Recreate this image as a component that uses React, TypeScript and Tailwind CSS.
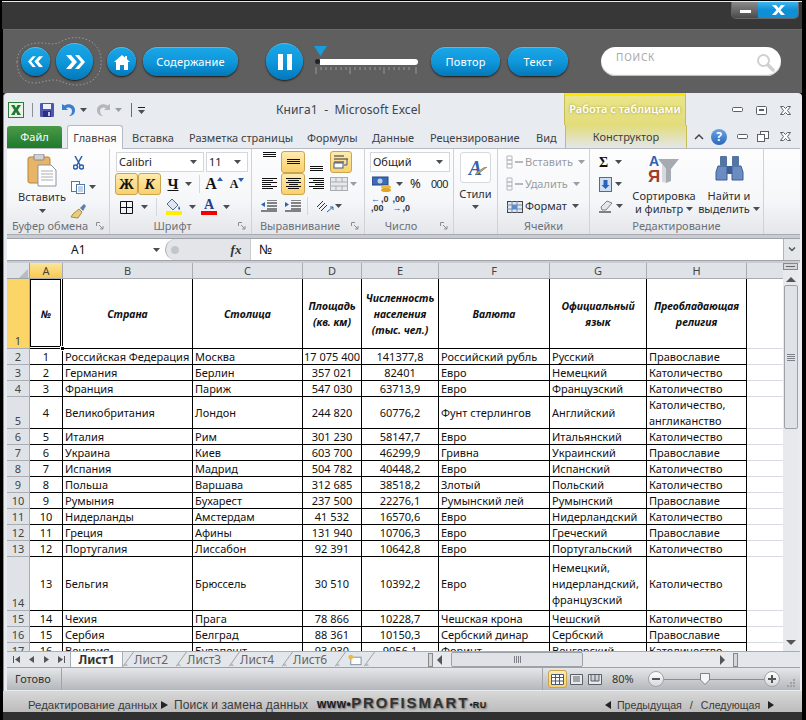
import type { ReactNode } from "react";

const uiFont = "font-['Noto_Sans','Liberation_Sans',sans-serif]";

// column widths incl. the 1px right border
const colWidths = [23, 33, 130, 110, 59, 77, 111, 97, 100, 36];
const colNames = ["A", "B", "C", "D", "E", "F", "G", "H"];

const headerCells: ReactNode[] = [
    "№",
    "Страна",
    "Столица",
    <>Площадь<br />(кв. км)</>,
    <>Численность<br />населения<br />(тыс. чел.)</>,
    "Валюта",
    <>Официальный<br />язык</>,
    <>Преобладающая<br />религия</>,
];

interface Row {
    h: number;
    cells: ReactNode[];
}

const rows: Row[] = [
    { h: 16, cells: ["1", "Российская Федерация", "Москва", "17 075 400", "141377,8", "Российский рубль", "Русский", "Православие"] },
    { h: 16, cells: ["2", "Германия", "Берлин", "357 021", "82401", "Евро", "Немецкий", "Католичество"] },
    { h: 16, cells: ["3", "Франция", "Париж", "547 030", "63713,9", "Евро", "Французский", "Католичество"] },
    { h: 32, cells: ["4", "Великобритания", "Лондон", "244 820", "60776,2", "Фунт стерлингов", "Английский", <span className="block leading-[15.5px]">Католичество,<br />англиканство</span>] },
    { h: 16, cells: ["5", "Италия", "Рим", "301 230", "58147,7", "Евро", "Итальянский", "Католичество"] },
    { h: 16, cells: ["6", "Украина", "Киев", "603 700", "46299,9", "Гривна", "Украинский", "Православие"] },
    { h: 16, cells: ["7", "Испания", "Мадрид", "504 782", "40448,2", "Евро", "Испанский", "Католичество"] },
    { h: 16, cells: ["8", "Польша", "Варшава", "312 685", "38518,2", "Злотый", "Польский", "Католичество"] },
    { h: 16, cells: ["9", "Румыния", "Бухарест", "237 500", "22276,1", "Румынский лей", "Румынский", "Православие"] },
    { h: 16, cells: ["10", "Нидерланды", "Амстердам", "41 532", "16570,6", "Евро", "Нидерландский", "Католичество"] },
    { h: 16, cells: ["11", "Греция", "Афины", "131 940", "10706,3", "Евро", "Греческий", "Православие"] },
    { h: 16, cells: ["12", "Португалия", "Лиссабон", "92 391", "10642,8", "Евро", "Португальский", "Католичество"] },
    { h: 54, cells: ["13", "Бельгия", "Брюссель", "30 510", "10392,2", "Евро", <span className="block leading-[16px]">Немецкий,<br />нидерландский,<br />французский</span>, "Католичество"] },
    { h: 16, cells: ["14", "Чехия", "Прага", "78 866", "10228,7", "Чешская крона", "Чешский", "Католичество"] },
    { h: 16, cells: ["15", "Сербия", "Белград", "88 361", "10150,3", "Сербский динар", "Сербский", "Православие"] },
    { h: 16, cells: ["16", "Венгрия", "Будапешт", "93 030", "9956,1", "Форинт", "Венгерский", "Католичество"] },
];

const blueBtn =
    "flex items-center justify-center bg-[linear-gradient(#19a6e6_0%,#0f97dc_50%,#0378b8_100%)] border-t border-[#4cc0f0] shadow-[0_1px_2px_rgba(0,0,0,0.75)] text-white";

const Caret = ({ dim }: { dim?: boolean }) => (
    <svg width="7" height="4" viewBox="0 0 7 4" className="shrink-0">
        <path d="M0 0h7L3.5 4z" fill={dim ? "#9a9da2" : "#4a4d52"} />
    </svg>
);

const Round = ({ size, children }: { size: number; children: ReactNode }) => (
    <div
        className={`${blueBtn} rounded-full shrink-0`}
        style={{ width: size, height: size }}
    >
        {children}
    </div>
);

const Pill = ({ w, label }: { w: number; label: string }) => (
    <div
        className={`${blueBtn} h-[29px] rounded-full shrink-0 text-[11px] tracking-[0.2px] ${uiFont}`}
        style={{ width: w }}
    >
        {label}
    </div>
);

const Chevrons = ({ flip, size }: { flip?: boolean; size: number }) => (
    <svg width={size} height={size * 0.7} viewBox="0 0 20 14" className={flip ? "rotate-180" : ""}>
        <path d="M1 0h5l6 7-6 7H1l6-7zM10 0h4l6 7-6 7h-4l6-7z" fill="#fff" />
    </svg>
);

const Toolbar = () => (
    <div className="h-[64px] shrink-0 bg-[#5f5f5f] border-t border-[#6a6a6a] flex items-center pl-[15px] relative">
        <svg className="absolute left-[11px] top-[5px]" width="90" height="54" viewBox="0 0 90 54" fill="none">
            <path
                d="M3 27C3 13 14 8 26 8c10 0 14 3 22-2 8-4 18-5 28 0 9 5 12 14 11 24-1 13-12 20-24 20-12 0-15-5-23-5-8 0-13 3-20 3C11 48 3 41 3 27z"
                stroke="#9a9a9a"
                strokeDasharray="1.5 2"
            />
        </svg>
        <div className="flex items-center relative ml-[3px]">
            <Round size={29}><Chevrons flip size={16} /></Round>
            <div className="ml-[6px]"><Round size={37}><Chevrons size={20} /></Round></div>
        </div>
        <div className="ml-[14px]">
            <Round size={29}>
                <svg width="16" height="15" viewBox="0 0 16 15">
                    <path d="M8 0l3 2.6V1h2v3.3L16 7h-2v8h-4V10H6v5H2V7H0z" fill="#fff" />
                </svg>
            </Round>
        </div>
        <div className="ml-[7px]"><Pill w={95} label="Содержание" /></div>
        <div className="ml-[28px]">
            <Round size={37}>
                <svg width="14" height="16" viewBox="0 0 14 16">
                    <path d="M0 0h5v16H0zM9 0h5v16H9z" fill="#fff" />
                </svg>
            </Round>
        </div>
        <div className="ml-[12px] w-[103px] shrink-0 flex flex-col">
            <svg width="13" height="10" viewBox="0 0 13 10" className="ml-[-1px] mt-[-3px]">
                <path d="M0 0h13L6.5 10z" fill="#1a9bdc" />
            </svg>
            <div className="flex items-center h-[8px] mt-[2px]">
                <div className="w-[5px] h-[5px] rounded-full bg-[#222]" />
                <div className="flex-1 h-[6px] bg-white rounded-r-[3px]" />
            </div>
            <svg width="103" height="8" viewBox="0 0 103 8" className="mt-[1px]">
                <path
                    d="M1 0v7M35 0v7M69 0v7M101 0v7M6 0v3M11 0v3M16 0v3M21 0v3M26 0v3M31 0v3M40 0v3M45 0v3M50 0v3M55 0v3M60 0v3M65 0v3M74 0v3M79 0v3M84 0v3M89 0v3M94 0v3"
                    stroke="#999"
                />
            </svg>
        </div>
        <div className="ml-[13px]"><Pill w={69} label="Повтор" /></div>
        <div className="ml-[8px]"><Pill w={60} label="Текст" /></div>
        <div className="ml-[33px] w-[180px] h-[29px] bg-white rounded-full shadow-[inset_0_-1px_1px_#bbb] flex items-start justify-between pl-[15px] pr-[6px] shrink-0">
            <span className={`text-[10px] text-[#a8a8a8] tracking-[0.8px] mt-[3px] ${uiFont}`}>ПОИСК</span>
            <svg width="19" height="19" viewBox="0 0 19 19" fill="none" className="mt-[6px]" stroke="#d0d0d0">
                <circle cx="7.5" cy="7.5" r="5.5" strokeWidth="2" />
                <path d="M12 12l5 5" strokeWidth="3.5" strokeLinecap="round" />
            </svg>
        </div>
    </div>
);

const TopBar = () => (
    <div className="h-[28px] shrink-0 bg-[#373737] border-t border-[#e8e8e8] mt-px ml-[-1px] flex justify-end pr-[3px]">
        <div className="w-[68px] h-[17px] flex rounded-b-[5px] overflow-hidden border border-t-0 border-[#666]">
            <div className="w-[26px] bg-[linear-gradient(#8a8a8a,#4b4b4b)] flex items-center justify-center">
                <div className="w-[11px] h-[3px] bg-white mt-[3px]" />
            </div>
            <div className="flex-1 bg-[linear-gradient(#3fb4ee_0%,#0e8fd6_50%,#0e8fd6_100%)] flex items-center justify-center">
                <svg width="13" height="10" viewBox="0 0 13 10">
                    <path d="M0 0h4l2.5 3L9 0h4L8.5 5 13 10H9L6.5 7 4 10H0l4.5-5z" fill="#fff" />
                </svg>
            </div>
        </div>
    </div>
);

const ExcelLogo = () => (
    <svg width="16" height="16" viewBox="0 0 16 16" className="shrink-0">
        <rect x="0.5" y="0.5" width="15" height="15" fill="#e9f3e6" stroke="#2c7d37" />
        <path d="M3 3h3.5L8 6l1.5-3H13L9.8 8 13 13H9.5L8 10l-1.5 3H3l3.2-5z" fill="#1f7a33" />
    </svg>
);

const SaveIcon = () => (
    <svg width="14" height="14" viewBox="0 0 14 14" className="shrink-0">
        <rect width="14" height="14" rx="1" fill="#4f56b0" />
        <rect x="3" y="1" width="8" height="5" fill="#eef0fa" />
        <rect x="3" y="8" width="8" height="6" fill="#2a2f80" />
        <rect x="8" y="9" width="2" height="4" fill="#c3c6e8" />
    </svg>
);

const UndoIcon = ({ color, flip }: { color: string; flip?: boolean }) => (
    <svg width="14" height="14" viewBox="0 0 14 14" fill="none" className={flip ? "-scale-x-100 shrink-0" : "shrink-0"}>
        <path d="M0 1v6h6L4 5c3-1.5 6 0 6 3 0 2-1 4-3 5 4 0 6-2.500 6-6C13 2 7-.5 2.500 2.500z" fill={color} />
    </svg>
);

const WinControls = ({ gap }: { gap: boolean }) => (
    <div className="flex items-center">
        <svg width="11" height="6" viewBox="0 0 11 6">
            <rect x="0.5" y="0.5" width="10" height="4" rx="1" fill="#fff" stroke="#5a6068" />
        </svg>
        <div className={gap ? "w-[13px]" : "w-[9px]"} />
        {gap ? (
            <svg width="11" height="9" viewBox="0 0 11 9">
                <rect x="0.5" y="0.5" width="10" height="8" rx="1" fill="#fff" stroke="#5a6068" />
                <rect x="3" y="3" width="5" height="2" fill="#5a6068" />
            </svg>
        ) : (
            <svg width="12" height="11" viewBox="0 0 12 11" fill="#fff" stroke="#5a6068">
                <rect x="3.5" y="0.5" width="8" height="7" />
                <rect x="0.5" y="3.5" width="7" height="7" />
            </svg>
        )}
        <div className={gap ? "w-[13px]" : "w-[11px]"} />
        <svg width="11" height="9" viewBox="0 0 11 9">
            <path d="M0.500 0.500h3l2 2 2-2h3l-3 4 3 4h-3l-2-2-2 2h-3l3-4z" fill="#fff" stroke="#5a6068" />
        </svg>
    </div>
);

const TitleRow = () => (
    <div className="h-[32px] shrink-0 flex">
        <div className="w-[269px] shrink-0 flex items-center gap-[4px] pl-px pt-[2px]">
            <ExcelLogo />
            <div className="w-px h-[14px] bg-[#8b9097] ml-[4px]" />
            <div className="ml-[3px]"><SaveIcon /></div>
            <div className="ml-[4px] flex items-center gap-[4px]">
                <UndoIcon color="#3a7fcf" />
                <Caret />
            </div>
            <div className="ml-[5px] flex items-center gap-[5px]">
                <UndoIcon color="#b4b6ba" flip />
                <Caret dim />
            </div>
            <div className="w-px h-[14px] bg-[#6a6f76] ml-[5px]" />
            <div className="ml-[2px] flex flex-col gap-[2px]">
                <div className="w-[7px] h-px bg-[#222]" />
                <Caret />
            </div>
        </div>
        <div className={`w-[288px] shrink-0 flex items-center pt-[2px] text-[12px] tracking-[0.1px] text-[#3b4453] ${uiFont}`}>
            <span className="whitespace-pre">Книга1  -  Microsoft Excel</span>
        </div>
        <div className="w-[122px] shrink-0 border-x border-[#c4bd5a] border-t-[3px] border-t-[#ffe600] bg-[linear-gradient(#ebe58b,#e2dc7b)] flex justify-center pt-[5px]">
            <span className={`text-[11px] font-semibold text-white [text-shadow:0_0_3px_#a09a30] ${uiFont}`}>Работа с таблицами</span>
        </div>
        <div className="flex-1 flex items-center pl-[46px] pt-[2px]">
            <WinControls gap />
        </div>
    </div>
);

const tabs: [string, number][] = [
    ["Вставка", 132],
    ["Разметка страницы", 189],
    ["Формулы", 307],
    ["Данные", 372],
    ["Рецензирование", 430],
    ["Вид", 536],
];

const TabsRow = () => (
    <div className={`h-[24px] shrink-0 flex text-[11px] text-[#3b3f46] border-b border-[#b6bac0] ${uiFont}`}>
        <div className="w-[55px] mt-px shrink-0 bg-[linear-gradient(#4a9a47,#1f7a2c)] rounded-t-[3px] text-white flex items-center justify-center">Файл</div>
        <div className="w-[56px] ml-[5px] shrink-0 bg-[#fcfcfd] border border-b-0 border-[#b6bac0] rounded-t-[3px] h-[24px] flex items-center justify-center pt-px">Главная</div>
        <div className="w-[442px] shrink-0 flex">
            {tabs.map(([label, x], i) => (
                <span
                    key={label}
                    className="whitespace-nowrap leading-[25px] shrink-0"
                    style={{ marginLeft: i === 0 ? 9 : 0, width: i < tabs.length - 1 ? tabs[i + 1][1] - x : 28 }}
                >
                    {label}
                </span>
            ))}
        </div>
        <div className="w-[122px] shrink-0 border-x border-[#c4bd5a] bg-[linear-gradient(#e2dc7b,#e4e6ea)] flex items-center justify-center pt-px">Конструктор</div>
        <div className="flex-1 flex items-center pl-[7px]">
            <svg width="10" height="7" viewBox="0 0 10 7" fill="none" stroke="#444" strokeWidth="1.500">
                <path d="M1 6l4-4 4 4" />
            </svg>
            <div className="ml-[7px] w-[16px] h-[16px] rounded-full bg-[linear-gradient(#6ea4e4,#2a68bc)] text-white text-[12px] font-bold flex items-center justify-center">?</div>
            <div className="ml-[10px]"><WinControls gap={false} /></div>
        </div>
    </div>
);

const GroupLabel = ({ label, launcher = true }: { label: string; launcher?: boolean }) => (
    <div className={`h-[17px] shrink-0 flex items-center justify-center relative pt-[2px] text-[11px] text-[#6b7079] ${launcher ? "pr-[16px]" : ""} ${uiFont}`}>
        <span>{label}</span>
        {launcher && (
            <svg width="8" height="8" viewBox="0 0 8 8" fill="none" stroke="#8a8e94" className="absolute right-[5px] top-[5px]">
                <path d="M0.500 4V0.500H4M3 3l4 4M7 4v3H4" />
            </svg>
        )}
    </div>
);

const Group = ({ w, label, launcher, children }: { w: number; label: string; launcher?: boolean; children: ReactNode }) => (
    <div className="shrink-0 flex flex-col border-r border-[#cfd2d7] bg-[linear-gradient(#fdfdfe_0%,#f6f7f9_60%,#e4e6ea_100%)]" style={{ width: w }}>
        <div className="flex-1 min-h-0">{children}</div>
        <GroupLabel label={label} launcher={launcher} />
    </div>
);

const ComboBox = ({ w, label }: { w: number; label: string }) => (
    <div className={`h-[20px] bg-white border border-[#d3d6da] flex items-center justify-between pl-[2px] pr-[6px] text-[11px] text-[#222] shrink-0 ${uiFont}`} style={{ width: w }}>
        <span>{label}</span>
        <Caret />
    </div>
);

const activeCell = "bg-[linear-gradient(#fdebb0,#fbd06a)] border border-[#c9a54e] rounded-[3px]";

const Tool = ({ w, active, children }: { w: number; active?: boolean; children: ReactNode }) => (
    <div className={`h-[22px] shrink-0 flex items-center justify-center ${active ? activeCell : ""}`} style={{ width: w }}>
        {children}
    </div>
);

// horizontal lines of the alignment buttons: [x, y, width]
const Lines = ({ lines, color = "#111" }: { lines: [number, number, number][]; color?: string }) => (
    <svg width="15" height="14" viewBox="0 0 15 14">
        {lines.map(([x, y, w], i) => (
            <rect key={i} x={x} y={y} width={w} height="1" fill={color} />
        ))}
    </svg>
);

const RibbonTitle = ({ children, className }: { children: ReactNode; className?: string }) => (
    <span className={`text-[11px] leading-[13px] text-[#2b3038] ${uiFont} ${className ?? ""}`}>{children}</span>
);

const ClipboardGroup = () => (
    <Group w={103} label="Буфер обмена">
        <div className="flex">
            <div className="w-[60px] pl-[10px] flex flex-col items-center pt-[5px]">
                <svg width="30" height="33" viewBox="0 0 30 33" className="shrink-0">
                    <rect x="1" y="3" width="22" height="26" rx="2" fill="#e8b468" stroke="#b98434" />
                    <rect x="7" y="0" width="10" height="6" rx="1" fill="#cfd3d8" stroke="#888" />
                    <path d="M11 11h13l5 5v16H11z" fill="#fff" stroke="#8d939b" />
                    <path d="M14 17h12M14 20h12M14 23h12M14 26h12" stroke="#a9adb3" />
                </svg>
                <RibbonTitle className="mt-[3px]">Вставить</RibbonTitle>
                <div className="mt-[6px]"><Caret /></div>
            </div>
            <div className="flex flex-col items-start pt-[3px] gap-[2px]">
                <Tool w={22}>
                    <svg width="11" height="14" viewBox="0 0 11 14" fill="none" stroke="#2a5fa8" strokeWidth="1.500">
                        <path d="M2 0l5 9M9 0L4 9" />
                        <circle cx="2.500" cy="11" r="2" />
                        <circle cx="8.500" cy="11" r="2" />
                    </svg>
                </Tool>
                <div className="flex items-center">
                    <Tool w={22}>
                        <svg width="15" height="13" viewBox="0 0 15 13" fill="#fff" stroke="#4d79ad">
                            <rect x="0.500" y="0.500" width="8" height="10" />
                            <rect x="5.500" y="3.500" width="8" height="9" />
                            <path d="M7 6h5M7 8h5M7 10h5" stroke="#88a3c4" />
                        </svg>
                    </Tool>
                    <Caret />
                </div>
                <Tool w={22}>
                    <svg width="16" height="15" viewBox="0 0 16 15">
                        <path d="M9 5l3 3-4 6-7-1 2-3z" fill="#e9cd7e" stroke="#a88a3d" />
                        <path d="M10 4l4-4 2 2-3 5z" fill="#5e7fae" />
                    </svg>
                </Tool>
            </div>
        </div>
    </Group>
);

const FontGroup = () => (
    <Group w={142} label="Шрифт">
        <div className="pl-[5px] pt-[3px] flex flex-col">
            <div className="flex gap-[2px] pl-px">
                <ComboBox w={88} label="Calibri" />
                <ComboBox w={42} label="11" />
            </div>
            <div className="flex items-center mt-px font-['Liberation_Serif',serif] font-bold text-[15px] leading-none text-[#111]">
                <Tool w={23} active>Ж</Tool>
                <Tool w={23} active><i>К</i></Tool>
                <Tool w={24}><u>Ч</u></Tool>
                <Caret />
                <div className="w-px h-[18px] bg-[#d4d7db] ml-[7px]" />
                <Tool w={28}>
                    <span className="text-[16px]">А</span>
                    <svg width="6" height="4" viewBox="0 0 6 4" className="mb-[10px]"><path d="M0 4h6L3 0z" fill="#2a5fa8" /></svg>
                </Tool>
                <Tool w={18}>
                    <span className="text-[12px]">А</span>
                    <svg width="6" height="4" viewBox="0 0 6 4" className="mb-[8px]"><path d="M0 0h6L3 4z" fill="#2a5fa8" /></svg>
                </Tool>
            </div>
            <div className="flex items-center mt-px">
                <Tool w={23}>
                    <svg width="13" height="13" viewBox="0 0 13 13" fill="none" stroke="#111">
                        <path d="M.5.500h12v12H.5zM6.500 0v13M0 6.500h13" />
                    </svg>
                </Tool>
                <div className="ml-[3px]"><Caret /></div>
                <div className="w-px h-[18px] bg-[#d4d7db] ml-[8px] mr-[8px]" />
                <div className="w-[17px] flex flex-col items-center">
                    <svg width="15" height="12" viewBox="0 0 15 12">
                        <path d="M6 0l6 6-5 5-6-6z" fill="#dfe6f0" stroke="#4a6c9b" />
                        <path d="M13 7c1 2 2 3 0 4-1-1-1-2 0-4z" fill="#2a5fa8" />
                    </svg>
                    <div className="w-[16px] h-[4px] bg-[#ffee00]" />
                </div>
                <div className="ml-[7px]"><Caret /></div>
                <div className="w-[16px] ml-[5px] flex flex-col items-center font-['Liberation_Serif',serif] font-bold text-[14px] leading-[12px] text-[#24408c]">
                    А
                    <div className="w-[16px] h-[4px] bg-[#f00000]" />
                </div>
                <div className="ml-[6px]"><Caret /></div>
            </div>
        </div>
    </Group>
);

const AlignGroup = () => (
    <Group w={113} label="Выравнивание">
        <div className="pl-[5px] pt-[2px] flex flex-col">
            <div className="flex items-start">
                <Tool w={24}><div className="mb-[6px]"><Lines lines={[[1, 0, 13], [1, 2, 13], [1, 4, 13]]} /></div></Tool>
                <Tool w={24} active><Lines lines={[[1, 4, 13], [1, 6, 13], [1, 8, 13]]} /></Tool>
                <Tool w={22}><div className="mt-[6px]"><Lines lines={[[1, 8, 13], [1, 10, 13], [1, 12, 13]]} /></div></Tool>
                <div className="ml-[3px]">
                    <Tool w={22} active>
                        <svg width="16" height="14" viewBox="0 0 16 14" fill="none">
                            <path d="M1 1h10M1 4h14M1 7h10" stroke="#333" />
                            <rect x="1" y="8" width="9" height="5" fill="#fff" stroke="#3a5d94" />
                            <path d="M14 4v6H11" stroke="#3a5d94" />
                        </svg>
                    </Tool>
                </div>
            </div>
            <div className="flex items-center">
                <Tool w={24}><Lines lines={[[0, 1, 15], [0, 3, 11], [0, 5, 15], [0, 7, 9], [0, 9, 15], [0, 11, 11]]} /></Tool>
                <Tool w={24} active><Lines lines={[[0, 1, 15], [2, 3, 11], [0, 5, 15], [3, 7, 9], [0, 9, 15], [2, 11, 11]]} /></Tool>
                <Tool w={22}><Lines lines={[[0, 1, 15], [4, 3, 11], [0, 5, 15], [6, 7, 9], [0, 9, 15], [4, 11, 11]]} /></Tool>
                <div className="ml-[3px] flex items-center gap-[2px]">
                    <svg width="18" height="14" viewBox="0 0 18 14" fill="#e8e9eb" stroke="#a8abb0">
                        <rect x="0.500" y="0.500" width="17" height="13" />
                        <path d="M0 5h18M0 9h18M6 0v5M12 0v5M6 9v5M12 9v5" />
                    </svg>
                    <Caret dim />
                </div>
            </div>
            <div className="flex items-center">
                <Tool w={24}>
                    <svg width="16" height="12" viewBox="0 0 16 12">
                        <path d="M6 0h10M6 3h10M6 6h10M6 9h10M0 11h16" stroke="#111" />
                        <path d="M0 4.500L4 2v5z" fill="#2a62b5" />
                    </svg>
                </Tool>
                <Tool w={24}>
                    <svg width="16" height="12" viewBox="0 0 16 12">
                        <path d="M6 0h10M6 3h10M6 6h10M6 9h10M0 11h16" stroke="#111" />
                        <path d="M4 4.500L0 2v5z" fill="#2a62b5" />
                    </svg>
                </Tool>
                <div className="w-px h-[18px] bg-[#d4d7db] ml-[2px]" />
                <div className="ml-[8px] flex items-center gap-[1px]">
                    <svg width="18" height="14" viewBox="0 0 18 14" fill="none" stroke="#333">
                        <path d="M1 8l6-6M3 10l6-6M5 12l6-6" />
                        <path d="M11 13l6-5M14 8h3v3" stroke="#2a62b5" />
                    </svg>
                    <Caret />
                </div>
            </div>
        </div>
    </Group>
);

const NumberGroup = () => (
    <Group w={89} label="Число">
        <div className="pl-[5px] pt-[3px] flex flex-col">
            <ComboBox w={80} label="Общий" />
            <div className={`flex items-center h-[22px] mt-px text-[#222] ${uiFont}`}>
                <svg width="20" height="17" viewBox="0 0 20 17" className="ml-[2px]">
                    <rect x="0" y="1" width="16" height="8" fill="#3c6cb8" stroke="#23497f" />
                    <circle cx="8" cy="5" r="2.500" fill="#bcd2ef" />
                    <ellipse cx="14" cy="11" rx="5" ry="2" fill="#f0b93c" />
                    <ellipse cx="14" cy="14" rx="5" ry="2" fill="#e0a526" />
                </svg>
                <div className="ml-[4px]"><Caret /></div>
                <span className="ml-[7px] text-[13px] w-[21px]">%</span>
                <span className="text-[11px] tracking-[-0.5px] font-['Liberation_Sans',sans-serif]">000</span>
            </div>
            <div className="flex items-center gap-[4px] pl-[1px]">
                <span className="flex flex-col text-[9px] leading-[9px] font-bold font-['Liberation_Sans',sans-serif] text-[#333]">
                    <span className="flex items-center gap-[1px]"><b className="text-[#2a62b5]">←</b>,0</span>
                    <span>,00</span>
                </span>
                <span className="flex flex-col text-[9px] leading-[9px] font-bold font-['Liberation_Sans',sans-serif] text-[#333]">
                    <span>,00</span>
                    <span className="flex items-center gap-[1px]"><b className="text-[#2a62b5]">→</b>,0</span>
                </span>
            </div>
        </div>
    </Group>
);

const StylesGroup = () => (
    <Group w={44} label="" launcher={false}>
        <div className="flex flex-col items-center pt-[3px]">
            <div className="w-[31px] h-[31px] bg-white border border-[#d6d9dd] rounded-[3px] flex items-center justify-center relative">
                <span className="font-['Liberation_Serif',serif] font-bold italic text-[20px] text-[#3360a8]">A</span>
                <svg width="12" height="9" viewBox="0 0 12 9" className="absolute right-[3px] bottom-[6px]">
                    <path d="M0 8l3-1 9-7-2-0-8 5z" fill="#d9a83a" stroke="#3360a8" strokeWidth="0.5" />
                </svg>
            </div>
            <RibbonTitle className="mt-[4px]">Стили</RibbonTitle>
            <div className="mt-[5px]"><Caret /></div>
        </div>
    </Group>
);

const CellIcon = ({ dim }: { dim?: boolean }) => (
    <svg width="18" height="15" viewBox="0 0 18 15" fill="none" stroke={dim ? "#b5b8bc" : "#4a6c9b"} className="shrink-0">
        <path d="M1 1h5v4H1zM1 5h5v4H1zM1 9h5v4H1z" />
        <path d="M9 7h8" strokeWidth="2" />
    </svg>
);

const CellsGroup = () => (
    <Group w={92} label="Ячейки" launcher={false}>
        <div className={`flex flex-col pl-[8px] pt-[2px] text-[11px] ${uiFont}`}>
            <div className="h-[22px] flex items-center gap-[1px] text-[#9a9da3]">
                <CellIcon dim /><span>Вставить</span><div className="ml-[4px]"><Caret dim /></div>
            </div>
            <div className="h-[22px] flex items-center gap-[1px] text-[#9a9da3]">
                <CellIcon dim /><span>Удалить</span><div className="ml-[4px]"><Caret dim /></div>
            </div>
            <div className="h-[22px] flex items-center gap-[1px] text-[#2b3038]">
                <svg width="18" height="16" viewBox="0 0 18 16" className="shrink-0">
                    <rect x="1.500" y="3.500" width="15" height="11" fill="#dfe7f3" stroke="#444" />
                    <path d="M1 7h15M1 11h15M6 3v12M11 3v12" stroke="#7b8ba5" />
                    <rect x="6" y="7" width="5" height="4" fill="#5b8ad0" />
                </svg>
                <span>Формат</span><div className="ml-[4px]"><Caret /></div>
            </div>
        </div>
    </Group>
);

const EditGroup = () => (
    <Group w={174} label="Редактирование" launcher={false}>
        <div className="flex">
            <div className="w-[38px] pl-[9px] pt-[2px] flex flex-col">
                <div className="h-[22px] flex items-center gap-[5px]">
                    <span className="font-['Liberation_Serif',serif] font-bold text-[14px] text-[#111] w-[11px]">Σ</span>
                    <Caret />
                </div>
                <div className="h-[22px] flex items-center gap-[3px]">
                    <svg width="13" height="15" viewBox="0 0 13 15">
                        <rect x="0.500" y="0.500" width="12" height="14" fill="#cfe0f6" stroke="#3b6fb5" />
                        <path d="M4.500 3h4v5h2l-4 4-4-4h2z" fill="#2a62b5" />
                    </svg>
                    <Caret />
                </div>
                <div className="h-[22px] flex items-center gap-[3px]">
                    <svg width="14" height="13" viewBox="0 0 14 13">
                        <path d="M2 7l6-6 5 2-6 7H3z" fill="#e4e6ea" stroke="#7d8289" />
                        <path d="M0 12h12" stroke="#111" />
                    </svg>
                    <Caret />
                </div>
            </div>
            <div className="w-[72px] flex flex-col items-center pt-[5px]">
                <svg width="32" height="30" viewBox="0 0 32 30">
                    <path d="M10 5h21l-8 10v12l-5 2V15z" fill="#a6abb1" />
                    <path d="M14 10l4 5v14l-4-1z" fill="#d6d9dc" />
                    <text x="1" y="12" fontFamily="Liberation Sans" fontWeight="700" fontSize="14" fill="#2a62b5">A</text>
                    <text x="0" y="28" fontFamily="Liberation Sans" fontWeight="700" fontSize="17" fill="#a33a2a">Я</text>
                </svg>
                <RibbonTitle className="mt-[5px] text-center">Сортировка</RibbonTitle>
                <span className="flex items-center gap-[3px]">
                    <RibbonTitle>и фильтр</RibbonTitle>
                    <Caret />
                </span>
            </div>
            <div className="w-[58px] flex flex-col items-center pt-[5px]">
                <svg width="29" height="30" viewBox="0 0 29 30">
                    <path d="M3 12h9v14H1V18z" fill="#6b8cc0" stroke="#3f5f94" />
                    <path d="M17 12h9l2 6v8H17z" fill="#6b8cc0" stroke="#3f5f94" />
                    <rect x="5" y="2" width="7" height="10" rx="1" fill="#54759f" />
                    <rect x="17" y="2" width="7" height="10" rx="1" fill="#54759f" />
                    <rect x="12" y="12" width="5" height="8" fill="#3f5f94" />
                </svg>
                <RibbonTitle className="mt-[5px]">Найти и</RibbonTitle>
                <span className="flex items-center gap-[3px]">
                    <RibbonTitle>выделить</RibbonTitle>
                    <Caret />
                </span>
            </div>
        </div>
    </Group>
);

const Ribbon = () => (
    <div className="h-[85px] shrink-0 flex">
        <ClipboardGroup />
        <FontGroup />
        <AlignGroup />
        <NumberGroup />
        <StylesGroup />
        <CellsGroup />
        <EditGroup />
        <div className="flex-1 bg-[linear-gradient(#fdfdfe_0%,#f6f7f9_60%,#e4e6ea_100%)]" />
    </div>
);

const FormulaBar = () => (
    <div className="h-[29px] shrink-0 bg-[#c9cdd2] pt-[3px] pb-[2px] border-t border-[#a9adb3]">
        <div className="h-[23px] flex bg-white border-y border-[#9fa3a9]">
            <div className={`w-[158px] shrink-0 flex items-center justify-between pr-[5px] pl-[64px] text-[12px] text-[#111] ${uiFont}`}>
                <span>A1</span>
                <Caret />
            </div>
            <div className="w-[57px] shrink-0 bg-[#e3e5e9] rounded-l-full border-l border-[#a9adb3] flex items-center pl-[5px]">
                <div className="w-[8px] h-[8px] rounded-full bg-[#c3c6ca]" />
            </div>
            <div className="w-[29px] shrink-0 flex items-center justify-center border-r border-[#c9cdd2] bg-[#e3e5e9] font-['Liberation_Serif',serif] italic font-bold text-[13px] text-[#333]">
                fx
            </div>
            <div className={`flex-1 flex items-center pl-[8px] text-[13px] text-[#111] ${uiFont}`}>№</div>
            <div className="w-[17px] shrink-0 bg-[#e4e7ea] border-l border-[#b0b4ba] flex items-center justify-center">
                <svg width="8" height="5" viewBox="0 0 8 5" fill="none" stroke="#555" strokeWidth="1.500">
                    <path d="M1 0.500l3 3 3-3" />
                </svg>
            </div>
        </div>
    </div>
);

const Sheet = () => (
    <div className={`h-[388px] shrink-0 flex ${uiFont}`}>
        <div className="w-[776px] h-full overflow-hidden shrink-0 bg-white">
            <table className="table-fixed border-separate border-spacing-0 text-[11px] leading-[15px] text-[#111]" style={{ width: 776 }}>
                <colgroup>
                    {colWidths.map((w, i) => (
                        <col key={i} style={{ width: w }} />
                    ))}
                </colgroup>
                <thead>
                    <tr className="h-[16px] text-[#444] text-center">
                        <th className="bg-[#dfe3e8] border-r border-b border-[#9da1a7] font-normal p-0">
                            <svg width="9" height="9" viewBox="0 0 9 9" className="ml-[12px] mt-[5px]">
                                <path d="M9 0v9H0z" fill="#b8bcc2" />
                            </svg>
                        </th>
                        {colNames.map((c, i) => (
                            <th
                                key={c}
                                className={`${i === 0 ? "bg-[linear-gradient(#fce49a,#f9c94f)]" : "bg-[#dfe3e8]"} border-r border-b border-[#a9adb3] font-normal p-0`}
                            >
                                {c}
                            </th>
                        ))}
                        <th className="bg-[#dfe3e8] border-b border-[#a9adb3] p-0" />
                    </tr>
                </thead>
                <tbody>
                    <tr className="h-[70px]">
                        <td className="bg-[#fcd567] border-r border-b border-[#a9adb3] text-center text-[#444] align-bottom p-0">1</td>
                        {headerCells.map((cell, i) => (
                            <td key={i} className="relative border-r border-b border-black text-center font-bold italic p-0 text-[10.5px] leading-[16px]">
                                {cell}
                                {i === 0 && (
                                    <>
                                        <div className="absolute top-0 left-0 right-[1px] bottom-[1px] border border-black" />
                                        <div className="absolute right-[-3px] bottom-[-3px] w-[5px] h-[5px] bg-black border border-white" />
                                    </>
                                )}
                            </td>
                        ))}
                        <td className="border-b border-[#d8dbdf] p-0" />
                    </tr>
                    {rows.map((row, r) => (
                        <tr key={r} style={{ height: row.h }}>
                            <td className="bg-[#dfe3e8] border-r border-b border-[#a9adb3] text-center text-[#444] align-bottom p-0">{r + 2}</td>
                            {row.cells.map((cell, i) => (
                                <td
                                    key={i}
                                    className={`border-r border-b border-black p-0 whitespace-nowrap overflow-hidden ${i === 0 || i === 3 || i === 4 ? "text-center" : "text-left pl-[2px]"}`}
                                >
                                    {cell}
                                </td>
                            ))}
                            <td className="border-b border-[#d8dbdf] p-0" />
                        </tr>
                    ))}
                </tbody>
            </table>
        </div>
        <div className="w-[15px] shrink-0 bg-[#e7e9ed] flex flex-col items-center">
            <div className="w-full h-[7px] bg-[#d3d6db] border border-[#888] flex items-center justify-center">
                <div className="w-[9px] h-px bg-[#666]" />
            </div>
            <svg width="10" height="5" viewBox="0 0 10 5" className="mt-[7px]"><path d="M0 5h10L5 0z" fill="#555" /></svg>
            <div className="w-[14px] h-[144px] mt-[3px] rounded-[2px] border border-[#9ea2a8] bg-[#dfe2e6] flex flex-col items-center justify-center gap-px">
                <div className="w-[8px] h-px bg-[#7d8187]" />
                <div className="w-[8px] h-px bg-[#7d8187]" />
                <div className="w-[8px] h-px bg-[#7d8187]" />
                <div className="w-[8px] h-px bg-[#7d8187]" />
            </div>
            <div className="flex-1" />
            <svg width="10" height="5" viewBox="0 0 10 5" className="mb-[6px]"><path d="M0 0h10L5 5z" fill="#555" /></svg>
        </div>
    </div>
);

const Slant = () => (
    <svg width="11" height="15" viewBox="0 0 11 15" fill="none" className="shrink-0">
        <path d="M0 14.500L10.500 0" stroke="#9ea2a8" />
        <path d="M1 14h4l-2-3z" fill="#b9bdc3" />
    </svg>
);

const NavArrow = ({ d }: { d: string }) => (
    <svg width="7" height="7" viewBox="0 0 7 7"><path d={d} fill="#555" /></svg>
);

const SheetTabs = () => (
    <div className={`h-[16px] shrink-0 flex border-t border-[#a9adb3] bg-[#e3e6ea] text-[12px] leading-[15px] ${uiFont}`}>
        <div className="w-[63px] shrink-0 flex items-center justify-between pl-[6px] pr-[5px]">
            <NavArrow d="M0 0h1v7H0zM2 3.500L7 0v7z" />
            <NavArrow d="M1 3.500L6 0v7z" />
            <NavArrow d="M6 3.500L1 0v7z" />
            <NavArrow d="M7 0H6v7h1zM5 3.500L0 0v7z" />
        </div>
        <div className="w-[53px] shrink-0 bg-[#fafbfc] border-x border-[#a9adb3] text-center font-bold text-[#333]">Лист1</div>
        {["Лист2", "Лист3", "Лист4", "Лист6"].map((s) => (
            <div key={s} className="w-[53px] shrink-0 flex text-[#666]">
                <Slant />
                <span>{s}</span>
            </div>
        ))}
        <div className="w-[40px] shrink-0 flex items-center">
            <Slant />
            <svg width="15" height="12" viewBox="0 0 15 12" className="ml-[2px]">
                <rect x="3" y="3" width="11" height="8" fill="#fff" stroke="#7b8ba5" />
                <circle cx="3" cy="3" r="2.500" fill="#f0b93c" />
            </svg>
            <div className="ml-[2px]"><Slant /></div>
        </div>
        <div className="w-[53px] shrink-0" />
        <div className="w-[310px] shrink-0 flex items-center bg-[#e7e9ed]">
            <div className="w-[5px] h-[14px] bg-[#d3d6db] border border-[#888]" />
            <svg width="5" height="10" viewBox="0 0 5 10" className="ml-[4px]"><path d="M5 0v10L0 5z" fill="#555" /></svg>
            <div className="w-[132px] h-[15px] ml-[9px] rounded-[2px] border border-[#9ea2a8] bg-[#dfe2e6] flex items-center justify-center gap-px">
                <div className="w-px h-[7px] bg-[#7d8187]" />
                <div className="w-px h-[7px] bg-[#7d8187]" />
                <div className="w-px h-[7px] bg-[#7d8187]" />
                <div className="w-px h-[7px] bg-[#7d8187]" />
            </div>
            <div className="flex-1" />
            <svg width="5" height="10" viewBox="0 0 5 10" className="mr-[8px]"><path d="M0 0v10l5-5z" fill="#555" /></svg>
            <div className="w-[5px] h-[14px] bg-[#d3d6db] border border-[#888]" />
        </div>
    </div>
);

const StatusBar = () => (
    <div className={`h-[23px] shrink-0 flex items-center bg-[linear-gradient(#e4e6e9,#b4b7bb)] border-t border-[#9ea2a8] text-[11px] text-[#333] ${uiFont}`}>
        <div className="w-[55px] h-full shrink-0 border-r border-[#a0a3a8] pl-[8px] flex items-center">Готово</div>
        <div className="w-[480px] shrink-0" />
        <div className="h-full w-px bg-[#a0a3a8] mr-[5px]" />
        <div className={`w-[19px] h-[18px] ${activeCell} flex items-center justify-center`}>
            <svg width="13" height="11" viewBox="0 0 13 11" fill="#fff" stroke="#4a5a70">
                <path d="M.5.500h12v10H.5zM.5 3.500h12M.5 7h12M4.500 0v11M8.500 0v11" />
            </svg>
        </div>
        <svg width="13" height="11" viewBox="0 0 13 11" fill="#e8e9ec" stroke="#5a6068" className="ml-[3px]">
            <path d="M.5.500h12v10H.5zM3 3h7M3 5h7M3 7h7" />
        </svg>
        <svg width="14" height="11" viewBox="0 0 14 11" fill="#e8e9ec" stroke="#5a6068" className="ml-[5px]">
            <path d="M.5.500h13v10H.5zM7 0v7M3 0v7h8V0" />
        </svg>
        <span className="ml-[10px] w-[36px]">80%</span>
        <div className="w-[16px] h-[16px] rounded-full border border-[#9ea2a8] bg-[linear-gradient(#fff,#d6d8dc)] flex items-center justify-center shrink-0">
            <div className="w-[8px] h-[2px] bg-[#555]" />
        </div>
        <div className="w-[100px] h-px bg-[#8a8e94] relative">
            <svg width="10" height="12" viewBox="0 0 10 12" className="absolute left-[36px] top-[-6px]">
                <path d="M.5.500h9V7L5 11.500.5 7z" fill="#f4f5f6" stroke="#7d8187" />
            </svg>
        </div>
        <div className="w-[16px] h-[16px] rounded-full border border-[#9ea2a8] bg-[linear-gradient(#fff,#d6d8dc)] flex items-center justify-center shrink-0 relative">
            <div className="w-[8px] h-[2px] bg-[#555]" />
            <div className="absolute w-[2px] h-[8px] bg-[#555]" />
        </div>
        <svg width="10" height="10" viewBox="0 0 10 10" className="ml-[5px] mt-[9px] shrink-0">
            <path d="M8 0h2v2H8zM5 3h2v2H5zM8 3h2v2H8zM2 6h2v2H2zM5 6h2v2H5zM8 6h2v2H8z" fill="#9ea2a8" />
        </svg>
    </div>
);

const Footer = () => (
    <div className="h-[21px] shrink-0 bg-[linear-gradient(#d8d8d8,#bcbcbc)] flex items-end font-['Liberation_Sans',sans-serif] text-[12px] leading-[14px] text-[#3a3a3a]">
        <span className="ml-[25px] w-[125px] shrink-0 whitespace-nowrap text-[11.4px]">Редактирование данных</span>
        <svg width="7" height="8" viewBox="0 0 7 8" className="ml-[8px] mb-[3px] shrink-0"><path d="M0 0l7 4-7 4z" fill="#222" /></svg>
        <span className="ml-[6px] w-[120px] shrink-0 whitespace-nowrap tracking-[0.1px]">Поиск и замена данных</span>
        <span className="ml-[23px] w-[174px] shrink-0 whitespace-nowrap flex items-baseline text-[#1c1c1c] [text-shadow:1px_1px_2px_#666]">
            <span className="font-bold text-[12px] tracking-[0.5px]">www•</span>
            <span className="font-bold text-[15px] tracking-[1.9px] text-[#333]">PROFISMART</span>
            <span className="font-bold text-[9px] tracking-[0.3px]">•RU</span>
        </span>
        <svg width="6" height="8" viewBox="0 0 6 8" className="ml-[114px] mb-[3px] shrink-0"><path d="M6 0L0 4l6 4z" fill="#222" /></svg>
        <span className="ml-[6px] whitespace-nowrap text-[10.6px]">Предыдущая</span>
        <span className="ml-[8px] text-[11px]">/</span>
        <span className="ml-[8px] whitespace-nowrap text-[10.6px]">Следующая</span>
        <svg width="6" height="8" viewBox="0 0 6 8" className="ml-[8px] mb-[3px] shrink-0"><path d="M0 0l6 4-6 4z" fill="#222" /></svg>
    </div>
);

const App = () => (
    <div className="w-[806px] h-[720px] bg-black overflow-hidden flex flex-col pl-[3px] pr-[4px]">
        <TopBar />
        <Toolbar />
        <div className="h-[598px] shrink-0 bg-[#e8ebef] rounded-t-[4px] pl-[3px] pr-[2px] flex flex-col border-l border-[#8c9096] overflow-hidden">
            <TitleRow />
            <TabsRow />
            <Ribbon />
            <FormulaBar />
            <Sheet />
            <SheetTabs />
            <StatusBar />
        </div>
        <Footer />
        <div className="flex-1 bg-[#303030]" />
    </div>
);

export default App;
